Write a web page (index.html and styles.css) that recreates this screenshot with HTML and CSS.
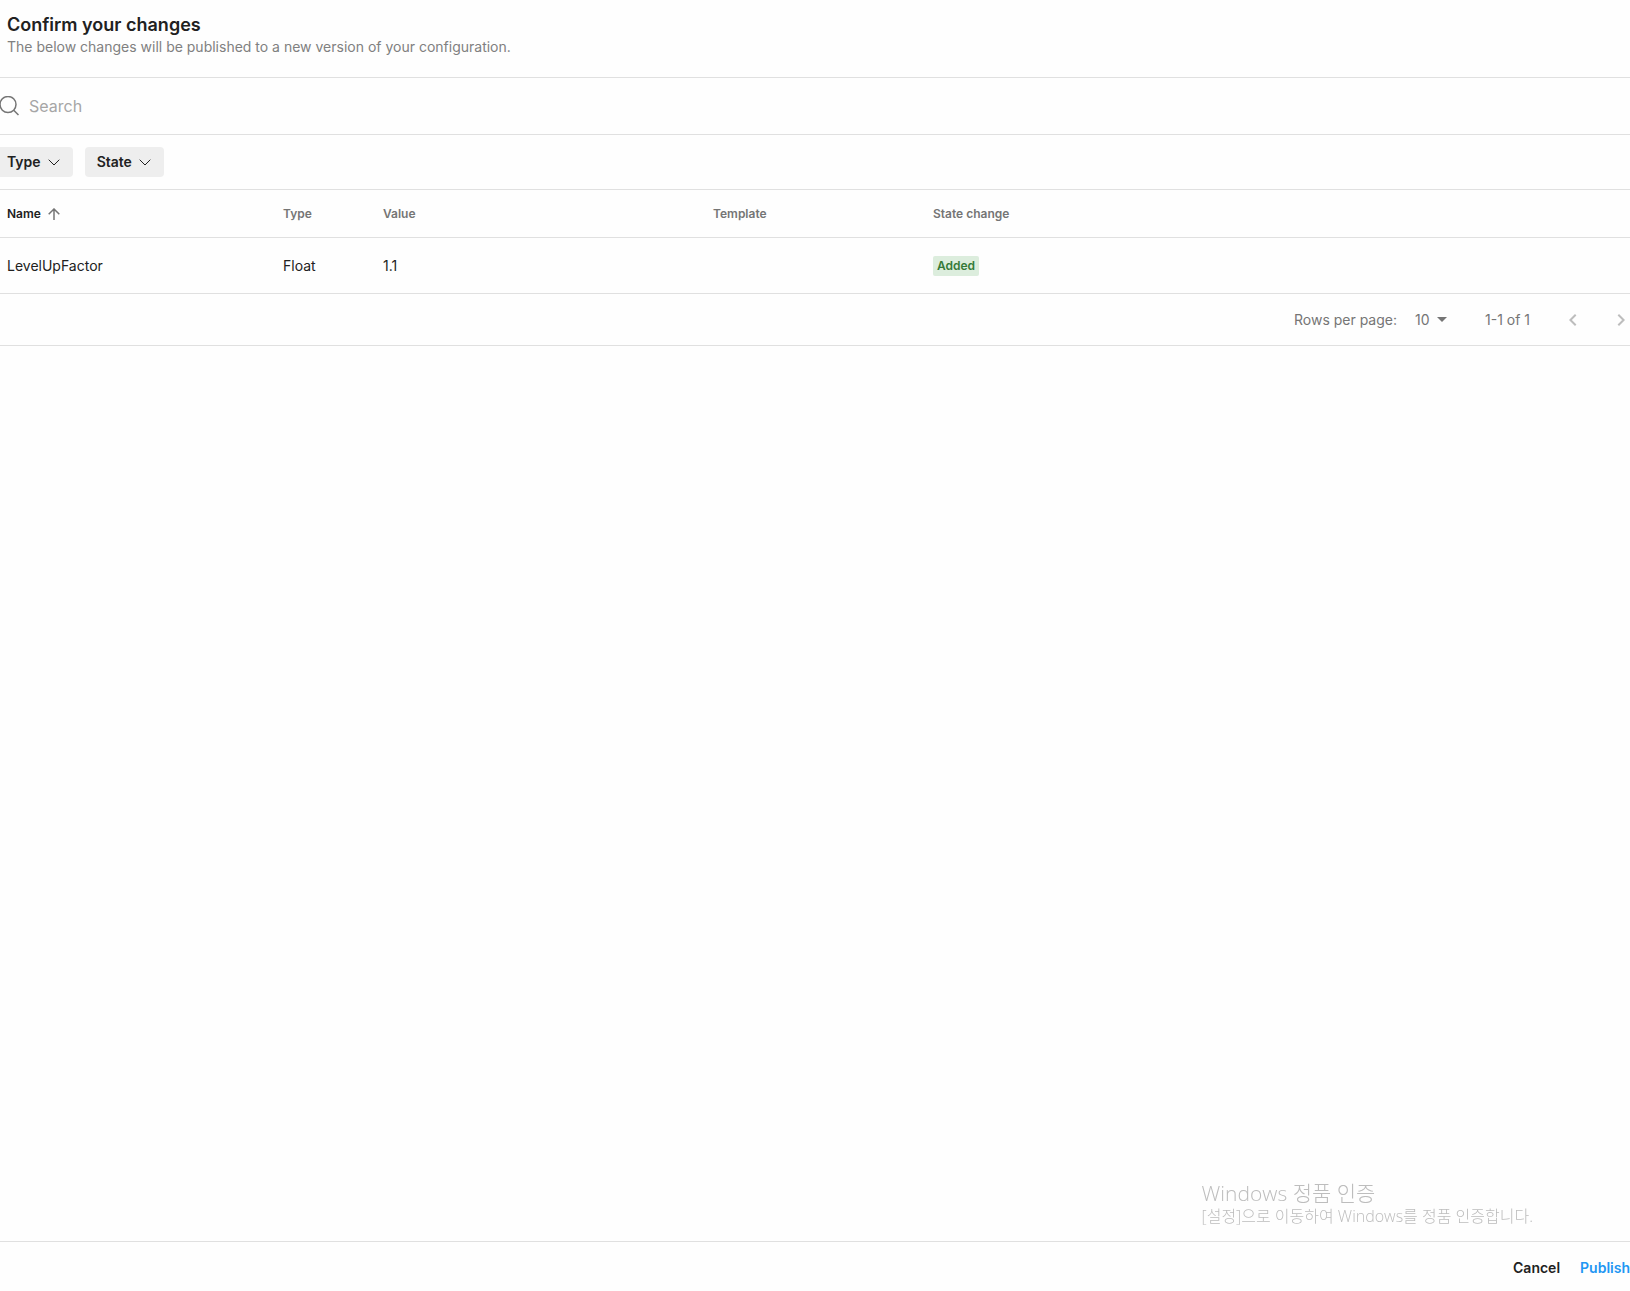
FILE: index.html
```html
<!DOCTYPE html>
<html lang="en">
  <head>
    <meta charset="utf-8">
    <title>Confirm your changes</title>

    <link rel="stylesheet" href="styles.css">
  </head>
  <body>
    <div class="page">
      <header class="page-header">
        <h1 class="title">Confirm your changes</h1>
        <p class="subtitle">The below changes will be published to a new version of your configuration.</p>
      </header>

      <label class="search-bar">
        <svg class="search-icon" width="20" height="20" viewBox="0 0 20 20">
          <circle cx="8" cy="8.5" r="8"></circle>
          <path d="M13.7 14.2L18.5 19"></path>
        </svg>
        <input class="search-input" type="search" placeholder="Search" aria-label="Search">
      </label>

      <div class="filters">
        <button class="filter-button filter-button-first">
          Type
          <svg class="chevron" width="12" height="12" viewBox="0 0 12 12"><path d="M0.7 3.7L6 9L11.3 3.7"></path></svg>
        </button>
        <button class="filter-button">
          State
          <svg class="chevron" width="12" height="12" viewBox="0 0 12 12"><path d="M0.7 3.7L6 9L11.3 3.7"></path></svg>
        </button>
      </div>

      <table class="changes">
        <thead>
          <tr>
            <th class="col-name">
              <button class="sort-button">
                Name
                <svg class="sort-icon" width="12" height="12" viewBox="0 0 12 12"><path d="M6 12V1M0.7 6.3L6 1L11.3 6.3"></path></svg>
              </button>
            </th>
            <th class="col-type">Type</th>
            <th class="col-value">Value</th>
            <th class="col-template">Template</th>
            <th>State change</th>
          </tr>
        </thead>
        <tbody>
          <tr>
            <td>LevelUpFactor</td>
            <td>Float</td>
            <td>1.1</td>
            <td></td>
            <td><span class="badge">Added</span></td>
          </tr>
        </tbody>
      </table>

      <div class="pagination">
        <label for="rows-per-page">Rows per page:</label>
        <div class="rows-select">
          <select id="rows-per-page">
            <option>10</option>
          </select>
          <svg class="caret" width="10" height="5" viewBox="0 0 10 5"><path d="M0 0H10L5 5Z"></path></svg>
        </div>
        <span class="range">1-1 of 1</span>
        <div class="page-buttons">
          <button class="page-button" aria-label="Previous page" disabled>
            <svg width="8" height="12" viewBox="0 0 8 12"><path d="M6.7 0.7L1.4 6L6.7 11.3"></path></svg>
          </button>
          <button class="page-button" aria-label="Next page" disabled>
            <svg width="8" height="12" viewBox="0 0 8 12"><path d="M1.3 0.7L6.6 6L1.3 11.3"></path></svg>
          </button>
        </div>
      </div>

      <footer class="footer">
        <button class="text-button">Cancel</button>
        <button class="text-button publish">Publish</button>
      </footer>
    </div>

    <div class="watermark" lang="ko">
      <p class="watermark-title">Windows 정품 인증</p>
      <p class="watermark-text">[설정]으로 이동하여 Windows를 정품 인증합니다.</p>
    </div>
  </body>
</html>
```
FILE: styles.css
```css
* {
  box-sizing: border-box;
}

body {
  margin: 0;
  background-color: #fefefe;
  color: #212121;
  font-family: Inter, "Liberation Sans", sans-serif;
  font-size: 14px;
  line-height: 20px;
  overflow-x: hidden;
}

p, h1 {
  margin: 0;
}

button {
  background-color: transparent;
  border: none;
  padding: 0;
  color: inherit;
  font: inherit;
  cursor: pointer;
}

svg {
  display: block;
  fill: none;
  flex-shrink: 0;
}

.page {
  display: flex;
  flex-direction: column;
  min-height: 100vh;
}

.page-header {
  padding: 13px 7px 20px;
  border-bottom: 1px solid #e0e0e0;
}

.title {
  font-size: 18px;
  font-weight: 600;
  line-height: 24px;
}

.subtitle {
  color: #808080;
}

.search-bar {
  display: flex;
  align-items: center;
  gap: 9px;
  padding: 16px 0;
  border-bottom: 1px solid #e0e0e0;
}

.search-icon {
  stroke: #757575;
  stroke-width: 1.5;
}

.search-input {
  flex: 1;
  height: 24px;
  padding: 0;
  border: none;
  outline: none;
  background-color: transparent;
  color: inherit;
  font-family: inherit;
  font-size: 16px;
}

.search-input::placeholder {
  color: #a6a6a6;
}

.filters {
  display: flex;
  gap: 12px;
  padding: 12px 0;
  border-bottom: 1px solid #e0e0e0;
}

.filter-button {
  display: flex;
  align-items: center;
  gap: 7px;
  height: 30px;
  padding: 0 13px 0 12px;
  border-radius: 4px;
  background-color: #eeeeee;
  font-weight: 600;
}

.filter-button-first {
  padding-left: 7px;
  border-radius: 0 4px 4px 0;
}

.chevron {
  stroke: #212121;
  stroke-width: 1;
}

.changes {
  width: 100%;
  border-spacing: 0;
  table-layout: fixed;
}

.changes th,
.changes td {
  padding: 0 7px;
  border-bottom: 1px solid #e0e0e0;
  text-align: left;
}

.changes th {
  height: 48px;
  color: #757575;
  font-size: 12px;
  font-weight: 600;
}

.changes td {
  height: 56px;
}

.col-name {
  width: 276px;
}

.col-type {
  width: 100px;
}

.col-value {
  width: 330px;
}

.col-template {
  width: 220px;
}

.sort-button {
  display: flex;
  align-items: center;
  gap: 7px;
  color: #212121;
}

.sort-icon {
  stroke: #757575;
  stroke-width: 1.5;
}

.badge {
  display: inline-block;
  padding: 0 4px;
  border-radius: 2px;
  background-color: #dceddd;
  color: #357a38;
  font-size: 12px;
  font-weight: 600;
}

.pagination {
  display: flex;
  align-items: center;
  justify-content: flex-end;
  height: 52px;
  border-bottom: 1px solid #e0e0e0;
  color: #757575;
}

.rows-select {
  display: flex;
  align-items: center;
  margin-left: 18px;
}

.rows-select select {
  width: 32px;
  margin-right: -10px;
  padding: 0;
  border: none;
  appearance: none;
  background-color: transparent;
  color: inherit;
  font: inherit;
}

.caret {
  fill: #757575;
  pointer-events: none;
}

.range {
  margin-left: 38px;
}

.page-buttons {
  display: flex;
  gap: 40px;
  margin-left: 39px;
  padding-right: 5px;
}

.page-button {
  stroke: #bdbdbd;
  stroke-width: 2;
}

.footer {
  display: flex;
  align-items: center;
  justify-content: flex-end;
  gap: 20px;
  margin-top: auto;
  padding: 16px 0 13px;
  border-top: 1px solid #e0e0e0;
}

.text-button {
  font-weight: 600;
}

.publish {
  color: #2196f3;
}

/* floats over the empty area above the footer */
.watermark {
  position: fixed;
  right: 97px;
  bottom: 64px;
  color: #bdbdbd;
  font-family: "Open Sans", "Noto Sans CJK KR", sans-serif;
  font-weight: 300;
  pointer-events: none;
}

.watermark-title {
  font-size: 21px;
  line-height: 24px;
}

.watermark-text {
  font-size: 16px;
  line-height: 22px;
}
```
